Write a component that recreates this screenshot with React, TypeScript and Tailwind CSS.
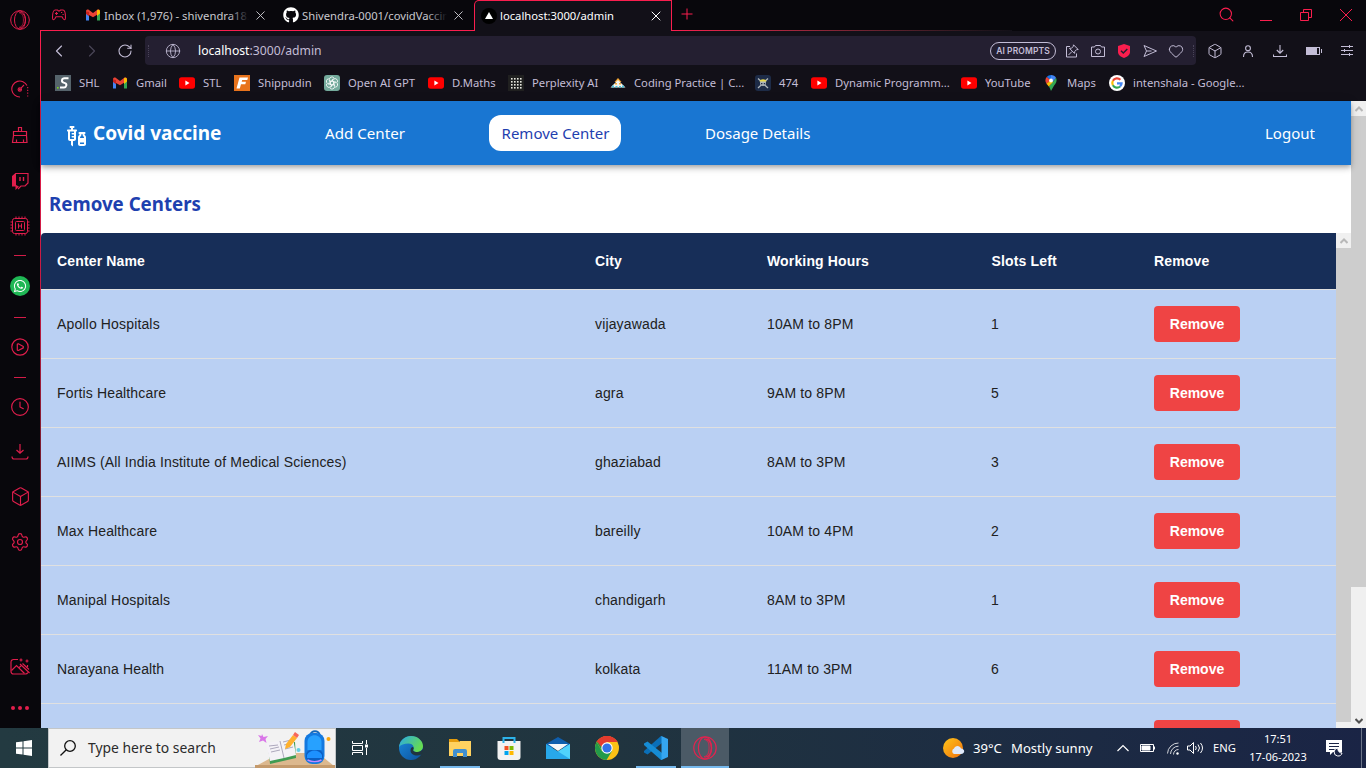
import React from 'react';
import { Box, Search, X, Settings, ChevronLeft, ChevronRight, RotateCw, Globe, Heart, Clock } from 'lucide-react';
import { MdVaccines } from 'react-icons/md';
import { FaWhatsapp, FaGithub } from 'react-icons/fa';

type IconProps = { className?: string };

const OperaIcon = ({ className }: IconProps) => (
  <svg viewBox="0 0 24 24" fill="none" stroke="currentColor" strokeWidth="1.2" className={className}>
    <circle cx="12" cy="12" r="11.2" />
    <ellipse cx="12" cy="12" rx="6.6" ry="11" />
    <path d="M11 3.4c3.8-1.6 7.4 2.6 7.4 8.600s-3.600 10.200-7.400 8.600" />
    <path d="M12.5 4.200c2.400 0 3.600 3.600 3.600 7.800s-1.200 7.800-3.600 7.800" opacity="0.7" />
  </svg>
);

const GmailIcon = ({ className }: IconProps) => (
  <svg viewBox="0 0 16 16" className={className}>
    <path d="M1 4v9.5h3V7z" fill="#4285f4" />
    <path d="M15 4v9.5h-3V7z" fill="#34a853" />
    <path d="M1 4.500C1 2.300 3 2.200 4 3l4 3 4-3c1-.8 3-.7 3 1.500L12 7.800 8 10.300 4 8z" fill="#ea4335" />
    <path d="M1 4.500V7l3 2.200V5z" fill="#c5221f" />
    <path d="M12 3.200c1.400-1 3-.5 3 1.500V6.600L12 9z" fill="#fbbc04" />
  </svg>
);

const YouTubeIcon = () => (
  <svg viewBox="0 0 16 16" className="size-4">
    <rect y="2.3" width="16" height="11.4" rx="2.600" fill="#ff0000" />
    <path d="M6.400 5.600v4.800L10.500 8z" fill="#fff" />
  </svg>
);

const ShlIcon = () => (
  <svg viewBox="0 0 16 16" className="size-4">
    <rect width="16" height="16" fill="#56646c" />
    <path d="M13.500 3.200H9.500c-3 0-3.300 3.600-1 4.400l1.500.500c2.300.800 1.500 4.400-1 4.400H5" fill="none" stroke="#fff" strokeWidth="2" />
    <rect x="2" y="12" width="1.600" height="1.600" fill="#7ed321" />
  </svg>
);

const FIcon = () => (
  <svg viewBox="0 0 16 16" className="size-4">
    <rect width="16" height="16" fill="#e8731c" />
    <path d="M5.500 2.500H14l-.7 2.500H8.200l-.5 1.800H12l-.7 2.400H7L5.800 13.500H2.500z" fill="#fff" />
  </svg>
);

const GptIcon = () => (
  <svg viewBox="0 0 16 16" className="size-4">
    <rect width="16" height="16" rx="3" fill="#74aa9c" />
    <g fill="none" stroke="#fff" strokeWidth="0.8">
      {[0, 60, 120, 180, 240, 300].map((a) => (
        <path key={a} d="M8 6L10 7.200V11M5.400 6.500V4.500a2.500 2.500 0 0 1 4.600-1.400" transform={`rotate(${a} 8 8)`} />
      ))}
    </g>
  </svg>
);

const PerplexityIcon = () => (
  <svg viewBox="0 0 16 16" className="size-4">
    <rect width="16" height="16" fill="#202020" />
    {[3, 6, 9, 12].map((y) => [3, 6, 9, 12].map((x) => <rect key={`${x}-${y}`} x={x} y={y} width="1.600" height="1.600" fill="#e8e8e0" />))}
  </svg>
);

const CodingIcon = () => (
  <svg viewBox="0 0 16 16" className="size-4">
    <path d="M8 3l3.500 4h-7z" fill="#f5a733" />
    <path d="M8 5l7.500 7.500H.5z" fill="#f4f4ee" />
    <path d="M5 8h2v1.500H5zM9 8h2v1.500H9z" fill="#f5a733" />
    <path d="M2 10.500h2v2H2zM5.500 11h2v1.500h-2zM9 11h2v1.500H9zM12 10.500h2v2h-2z" fill="#4fc3d9" />
  </svg>
);

const SkullIcon = () => (
  <svg viewBox="0 0 16 16" className="size-4">
    <rect width="16" height="16" rx="3" fill="#1d2b47" />
    <path d="M3 3.500l10 9.500M13 3.500L3 13" stroke="#aeb5ba" strokeWidth="1.300" />
    <circle cx="8" cy="8" r="3" fill="#aeb5ba" />
    <path d="M4.500 6.500C5 3.600 11 3.600 11.500 6.500z" fill="#e8d84a" />
    <path d="M6 8h1.400v1.300H6zM8.800 8h1.400v1.300H8.800z" fill="#1d2b47" />
  </svg>
);

const MapsIcon = () => (
  <svg viewBox="0 0 16 16" className="size-4">
    <path d="M8 0a5.600 5.600 0 0 0-4.300 2L8 6z" fill="#1a73e8" />
    <path d="M3.700 2C2 4 2 6.500 3.500 8.700L8 5.600z" fill="#ea4335" />
    <path d="M8 0c2.300 0 4.200 1.200 5.100 3L8 9z" fill="#4285f4" />
    <path d="M13.100 3c1.300 3-.3 5.600-2 7.500L8 16c-.8-2-1.400-3.400-2.200-4.400z" fill="#34a853" />
    <path d="M3.500 8.700l2.300 2.900L10 7 8 5z" fill="#fbbc04" />
    <circle cx="8" cy="5.500" r="1.900" fill="#fff" />
  </svg>
);

const GoogleIcon = () => (
  <svg viewBox="0 0 16 16" className="size-4">
    <circle cx="8" cy="8" r="8" fill="#fff" />
    <g fill="none" strokeWidth="2.200">
      <path d="M11.400 4.800A4.700 4.700 0 0 0 3.900 5.700" stroke="#ea4335" />
      <path d="M3.900 5.700a4.700 4.700 0 0 0 0 4.600" stroke="#fbbc04" />
      <path d="M3.900 10.300a4.700 4.700 0 0 0 7.200 1.200" stroke="#34a853" />
      <path d="M11.100 11.500A4.500 4.500 0 0 0 12.600 8.300H8" stroke="#4285f4" />
    </g>
  </svg>
);

const bookmarks: { label: string; icon: React.ReactNode; width: string }[] = [
  { label: 'SHL', icon: <ShlIcon />, width: 'w-[57px]' },
  { label: 'Gmail', icon: <GmailIcon className="size-4" />, width: 'w-[67px]' },
  { label: 'STL', icon: <YouTubeIcon />, width: 'w-[55px]' },
  { label: 'Shippudin', icon: <FIcon />, width: 'w-[90px]' },
  { label: 'Open AI GPT', icon: <GptIcon />, width: 'w-[104px]' },
  { label: 'D.Maths', icon: <YouTubeIcon />, width: 'w-[80px]' },
  { label: 'Perplexity AI', icon: <PerplexityIcon />, width: 'w-[102px]' },
  { label: 'Coding Practice | C...', icon: <CodingIcon />, width: 'w-[145px]' },
  { label: '474', icon: <SkullIcon />, width: 'w-[56px]' },
  { label: 'Dynamic Programm...', icon: <YouTubeIcon />, width: 'w-[150px]' },
  { label: 'YouTube', icon: <YouTubeIcon />, width: 'w-[82px]' },
  { label: 'Maps', icon: <MapsIcon />, width: 'w-[66px]' },
  { label: 'intenshala - Google...', icon: <GoogleIcon />, width: 'w-[150px]' },
];

const centers = [
  ['Apollo Hospitals', 'vijayawada', '10AM to 8PM', '1'],
  ['Fortis Healthcare', 'agra', '9AM to 8PM', '5'],
  ['AIIMS (All India Institute of Medical Sciences)', 'ghaziabad', '8AM to 3PM', '3'],
  ['Max Healthcare', 'bareilly', '10AM to 4PM', '2'],
  ['Manipal Hospitals', 'chandigarh', '8AM to 3PM', '1'],
  ['Narayana Health', 'kolkata', '11AM to 3PM', '6'],
  ['', '', '', ''],
];

const Dash = () => (
  <div className="flex h-3 shrink-0 items-center">
    <div className="h-px w-3 bg-[#d21c48]" />
  </div>
);

const Slot = ({ className, children }: { className: string; children: React.ReactNode }) => (
  <div className={`flex w-full shrink-0 items-center justify-center ${className}`}>{children}</div>
);

function Sidebar() {
  return (
    <aside className="flex h-full w-10 shrink-0 flex-col items-center bg-[#08070c] text-[#e01e4c]">
      <Slot className="h-10"><OperaIcon className="size-5" /></Slot>
      <Slot className="mt-[26px] h-[46px]">
        <svg viewBox="0 0 18 18" className="size-[18px]" fill="none" stroke="currentColor" strokeWidth="1.100">
          <path d="M9 17A8 8 0 1 1 16 5.500" />
          <path d="M16.700 7v10" strokeDasharray="1.200 1.600" />
          <circle cx="8.800" cy="9.500" r="1.700" />
          <path d="M10 8.200l3-3.200" />
          <circle cx="8.800" cy="9.500" r=".6" fill="currentColor" />
        </svg>
      </Slot>
      <Slot className="h-[46px]">
        <svg viewBox="0 0 18 18" className="size-[18px]" fill="none" stroke="currentColor" strokeWidth="1.200">
          <path d="M7.500 5.500V1.500h3v4M2.500 5.500h13v4h-13zM2.500 9.500L1.500 16.500h14.500L15.500 9.500M5.500 13.500v3M12.500 13.500v3" />
        </svg>
      </Slot>
      <Slot className="h-[45px]">
        <svg viewBox="0 0 18 18" className="size-[18px]" fill="none" stroke="currentColor">
          <path d="M4.500 1.500h12.500v9.500l-3 3H10l-3 3" strokeWidth="1.200" />
          <path d="M4.500 1L1 4v10.500h3.500V18l3.500-3.500-3-1.500V1z" fill="currentColor" stroke="none" />
          <path d="M9 5v4M12.500 5v4" strokeWidth="1.400" />
        </svg>
      </Slot>
      <Slot className="h-[46px]">
        <svg viewBox="0 0 20 20" className="size-5" fill="none" stroke="currentColor" strokeWidth="1">
          <rect x="2.500" y="2.500" width="15" height="15" rx="2" />
          <rect x="5.500" y="5.500" width="9" height="9" rx="1" />
          <path d="M8.500 7.500v5M11.500 7.500v5M8.500 10h3M6 .5v2M9 .5v2M12 .5v2M15 .5v2M6 17.500v2M9 17.500v2M12 17.500v2M15 17.500v2M.5 6h2M.5 9h2M.5 12h2M.5 15h2M17.500 6h2M17.500 9h2M17.500 12h2M17.500 15h2" />
        </svg>
      </Slot>
      <Dash />
      <Slot className="h-[50px]">
        <div className="flex size-5 items-center justify-center rounded-full bg-[#1fb755]">
          <FaWhatsapp className="size-[14px] text-white" />
        </div>
      </Slot>
      <Dash />
      <Slot className="h-12">
        <svg viewBox="0 0 18 18" className="size-[18px]" fill="none" stroke="currentColor" strokeWidth="1.200" strokeLinejoin="round">
          <circle cx="9" cy="9" r="8.200" />
          <path d="M6.300 6v6.200l1 .3 5-2.600V8.500L7.300 5.700z" />
        </svg>
      </Slot>
      <Dash />
      <Slot className="h-12"><Clock className="size-[20px]" strokeWidth={1.400} /></Slot>
      <Slot className="h-[42px]">
        <svg viewBox="0 0 18 18" className="size-[18px]" fill="none" stroke="currentColor" strokeWidth="1.200">
          <path d="M9 1v9M5.500 7L9 10.300 12.500 7M1 13.500c0 2 1 2.500 2 2.500h12c1 0 2-.5 2-2.500" />
        </svg>
      </Slot>
      <Slot className="h-[47px]"><Box className="size-[21px]" strokeWidth={1.300} /></Slot>
      <Slot className="h-11">
        <Settings className="size-5" strokeWidth={1.400} />
      </Slot>
      <Slot className="mt-[82px] h-[42px]">
        <svg viewBox="0 0 20 18" className="h-[18px] w-5" fill="none" stroke="currentColor" strokeWidth="1.200">
          <path d="M8 1.500H3.500a2.500 2.500 0 0 0-2.500 2.500v9.500A2.500 2.500 0 0 0 3.500 16h12a2.500 2.500 0 0 0 2.300-1.500" />
          <path d="M1.500 12.500l5-5 8 8M8.500 10L11 8M10 6l9.500 9M12.500 5.500l6.500 6" />
          <path d="M11 .5v3M9.500 2h3M17 1.500v3M15.500 3h3M17.500 7v2" />
        </svg>
      </Slot>
      <Slot className="h-10 gap-[3.500px]">
        <i className="size-[3.500px] rounded-full bg-current" />
        <i className="size-[3.500px] rounded-full bg-current" />
        <i className="size-[3.500px] rounded-full bg-current" />
      </Slot>
    </aside>
  );
}

function TabStrip() {
  return (
    <div className="flex h-[31px] shrink-0 bg-[#08070c] text-[11.250px] text-[#c9c7ce]">
      <div className="flex w-[434px] items-center border-b border-[#fa1e4e]">
        <svg viewBox="0 0 16 12" className="ml-[11px] h-3 w-4 shrink-0 text-[#e01e4c]" fill="none" stroke="currentColor" strokeWidth="1.100">
          <path d="M4 1h2.500l1 1h1l1-1H12c1.500 0 2.500 3.500 2.500 7.500 0 3-1.500 2.500-2.500 1l-1-1.700H5L4 9.500c-1 1.500-2.500 2-2.500-1C1.500 4.500 2.500 1 4 1z" />
          <path d="M4 4.500h3M5.500 3v3M10 3.500h1.200M11.500 5.500h1.200" />
        </svg>
        <GmailIcon className="ml-[18px] size-4 shrink-0" />
        <div className="relative ml-[3px] w-[145px] overflow-hidden pt-0.5 whitespace-nowrap">
          Inbox (1,976) - shivendra18.
          <div className="absolute inset-y-0 right-0 w-5 bg-linear-to-r from-transparent to-[#08070c]" />
        </div>
        <X className="ml-1 size-[15px] shrink-0" strokeWidth={1.500} />
        <FaGithub className="ml-[15px] size-4 shrink-0 text-white" />
        <div className="relative ml-[3px] w-[145px] overflow-hidden pt-0.5 whitespace-nowrap">
          Shivendra-0001/covidVaccine
          <div className="absolute inset-y-0 right-0 w-5 bg-linear-to-r from-transparent to-[#08070c]" />
        </div>
        <X className="ml-1 size-[15px] shrink-0" strokeWidth={1.500} />
      </div>
      <div className="flex w-[198px] items-center rounded-tl-[5px] border-t border-r border-l border-[#fa1e4e] bg-[#121018] text-white">
        <svg viewBox="0 0 16 16" className="ml-1.5 size-4 shrink-0">
          <circle cx="8" cy="8" r="8" fill="#000" />
          <path d="M8 4l4 7H4z" fill="#fff" />
        </svg>
        <span className="ml-[3px] w-[146px] whitespace-nowrap">localhost:3000/admin</span>
        <X className="ml-0.5 size-4 shrink-0" strokeWidth={1.500} />
      </div>
      <div className="flex flex-1 flex-col">
        <div className="flex h-[30px] items-center text-[#fa1e4e]">
          <svg viewBox="0 0 12 12" className="mb-0.5 ml-[9px] size-3" stroke="currentColor"><path d="M6 .5v11M.5 6h11" /></svg>
          <Search className="mb-0.5 ml-[525px] size-[17px]" strokeWidth={1.500} />
          <svg viewBox="0 0 12 12" className="ml-[25px] size-3" stroke="currentColor"><path d="M0 11.500h12" /></svg>
          <svg viewBox="0 0 12 12" className="ml-7 size-3" stroke="currentColor" fill="none"><path d="M.5 3.500h8v8h-8zM3.500 3.500v-3h8v8h-3" /></svg>
          <svg viewBox="0 0 12 12" className="ml-7 size-3" stroke="currentColor"><path d="M0 0l12 12M12 0L0 12" /></svg>
        </div>
        <div className="h-px w-[340px] bg-linear-to-r from-[#fa1e4e] to-[#121018]" />
      </div>
    </div>
  );
}

function AddressRow() {
  return (
    <div className="flex h-[39px] shrink-0 items-center text-[#c3bdd6]">
      <ChevronLeft className="ml-[8px] size-5" strokeWidth={1.400} />
      <ChevronRight className="ml-[13px] size-5 text-[#4a4657]" strokeWidth={1.400} />
      <RotateCw className="ml-[15px] size-4" strokeWidth={1.600} />
      <div className="ml-3 flex h-[29px] w-[1051px] items-center rounded bg-[#241f31]">
        <div className="ml-[3px] h-3 w-px border-l border-dotted border-[#4a4459]" />
        <Globe className="ml-4 size-4" strokeWidth={1.300} />
        <div className="ml-[17px] w-[792px] pt-0.5 text-[12.200px] whitespace-nowrap"><span className="text-white">localhost</span>:3000/admin</div>
        <div className="flex h-[18px] w-[66px] items-center justify-center rounded-full border border-[#c3bdd6] pt-px font-['Inter'] text-[8.500px] font-semibold tracking-[0.1px] whitespace-nowrap">AI PROMPTS</div>
        <svg viewBox="0 0 14 14" className="ml-[9px] size-[14px]" fill="none" stroke="currentColor">
          <path d="M5 2.500H1.500v10.500h10V9.500M3.500 11l3.500-3.500M8.500.8l4.700 4.700-1.700.2-1.700 1.700-.3 2-5-5 2-.3L8.300 2.500z" />
        </svg>
        <svg viewBox="0 0 14 14" className="ml-3 size-[14px]" fill="none" stroke="currentColor">
          <path d="M.5 3h3l1-1.500h5L10.500 3h3v9.500H.5z" /><circle cx="7" cy="7.500" r="2.500" />
        </svg>
        <svg viewBox="0 0 14 14" className="ml-3 size-[14px]">
          <path d="M7 0l6 2v6c0 3-3 5-6 6-3-1-6-3-6-6V2z" fill="#fa1e4e" /><path d="M4 6.700l2.300 2.300L10.300 5" fill="none" stroke="#241f31" strokeWidth="1.500" />
        </svg>
        <svg viewBox="0 0 14 14" className="ml-3 size-[14px]" fill="none" stroke="currentColor" strokeLinejoin="round">
          <path d="M1 1.500L13.500 7 1 12.500 3.500 7zM3.500 7h5" />
        </svg>
        <Heart className="ml-[11px] size-4" strokeWidth={1.500} />
        <div className="ml-[9px] h-3 w-px border-l border-dotted border-[#4a4459]" />
      </div>
      <Box className="ml-[11px] size-4" strokeWidth={1.500} />
      <svg viewBox="0 0 14 14" className="ml-[18px] size-[14px]" fill="none" stroke="currentColor" strokeWidth="1.100">
        <circle cx="7" cy="4.200" r="2.400" /><path d="M2.500 13c0-3.500 1.500-5 4.500-5s4.500 1.500 4.500 5" />
      </svg>
      <svg viewBox="0 0 14 14" className="ml-[18px] size-[14px]" fill="none" stroke="currentColor" strokeWidth="1.100">
        <path d="M7 1v8M3.800 6L7 9.200 10.200 6M.5 10.500v2h13v-2" />
      </svg>
      <svg viewBox="0 0 16 10" className="ml-[19px] h-[10px] w-4" fill="none" stroke="currentColor">
        <rect x=".5" y="1.500" width="13" height="7" /><rect x="0" y="1" width="11" height="8" fill="currentColor" stroke="none" /><path d="M15.500 3v4" />
      </svg>
      <svg viewBox="0 0 12 12" className="ml-[19px] size-3" fill="none" stroke="currentColor">
        <path d="M0 1.500h12M0 5.500h12M0 9.500h12M8.500 0v3M3.500 4v3M8.500 8v3" />
      </svg>
    </div>
  );
}

function Page() {
  return (
    <div className="flex min-h-0 flex-1 bg-white">
      <div className="flex min-w-0 flex-1 flex-col">
        <header className="z-10 flex h-16 shrink-0 items-center bg-[#1976d2] text-[15.150px] text-white shadow-[0_2px_4px_-1px_rgba(0,0,0,0.2),0_4px_5px_rgba(0,0,0,0.14),0_1px_10px_rgba(0,0,0,0.12)]">
          <MdVaccines className="mt-[5px] ml-6 size-6 shrink-0" />
          <div className="ml-1 w-[219px] text-[19px] font-bold whitespace-nowrap">Covid vaccine</div>
          <div className="ml-[13px] w-[164px] whitespace-nowrap">Add Center</div>
          <div className="flex h-9 w-[132px] items-center justify-center rounded-xl bg-white pl-px text-[15px] whitespace-nowrap text-[#1e40af]">Remove Center</div>
          <div className="ml-[84px] flex-1 text-[15px] whitespace-nowrap">Dosage Details</div>
          <div className="w-[86px] text-[15px] whitespace-nowrap">Logout</div>
        </header>
        <h1 className="flex h-[68px] shrink-0 items-center pt-[10px] pl-2 text-[18.700px] font-bold text-[#1e40af]">Remove Centers</h1>
        <div className="flex min-h-0 flex-1 overflow-hidden">
          <div className="flex w-[1295px] shrink-0 flex-col font-['Liberation_Sans',sans-serif] text-sm tracking-[0.0107em] text-[#212121]">
            <div className="grid h-[57px] shrink-0 grid-cols-[538px_172px_224.500px_162.500px_198px] items-center rounded-tl border-b border-[#e0e0e0] bg-[#172e58] font-bold text-white">
              {['Center Name', 'City', 'Working Hours', 'Slots Left', 'Remove'].map((h) => (
                <div key={h} className="pl-4">{h}</div>
              ))}
            </div>
            {centers.map((row, i) => (
              <div key={i} className="grid h-[69px] shrink-0 grid-cols-[538px_172px_224px_163px_198px] items-center border-b border-[#e0e0e0] bg-[#bad0f3]">
                {row.map((cell, j) => (
                  <div key={j} className="pl-4">{cell}</div>
                ))}
                <div className="pl-4">
                  <button className="block h-9 w-[86px] rounded bg-[#ef4444] font-bold tracking-normal text-white">Remove</button>
                </div>
              </div>
            ))}
          </div>
          <div className="flex w-[15px] flex-col bg-[#f0f0f0]">
            <div className="flex h-[15px] items-center justify-center text-[#b8b8b8]">
              <svg viewBox="0 0 8 6" className="h-1.5 w-2" fill="none" stroke="currentColor" strokeWidth="2"><path d="M.5 5L4 1.500 7.500 5" /></svg>
            </div>
            <div className="mb-1.5 flex-1 bg-[#cdcdcd]" />
          </div>
        </div>
      </div>
      <div className="flex w-[15px] shrink-0 flex-col items-center bg-[#f0f0f0]">
        <div className="flex h-[15px] items-center text-[#b8b8b8]">
          <svg viewBox="0 0 8 6" className="h-1.5 w-2" fill="none" stroke="currentColor" strokeWidth="2"><path d="M.5 5L4 1.500 7.500 5" /></svg>
        </div>
        <div className="h-[471px] w-full bg-[#cdcdcd]" />
        <div className="mt-auto flex h-[15px] items-center text-[#505050]">
          <svg viewBox="0 0 8 6" className="h-1.5 w-2" fill="none" stroke="currentColor" strokeWidth="2"><path d="M.5 1L4 4.500 7.500 1" /></svg>
        </div>
      </div>
    </div>
  );
}

function SearchArt() {
  return (
    <svg viewBox="0 0 80 40" className="h-[40px] w-[80px] shrink-0">
      <path d="M1 38L25 25h38l16 13z" fill="#dcb88e" />
      <path d="M0 37h80v3H0z" fill="#c49a6c" />
      <path d="M13 17l27-3 1 16-26 6z" fill="#3f9b52" />
      <path d="M11 15l13-2 14-3 3 17-12 3-14 3z" fill="#f4f2f7" />
      <path d="M25 13l4 17M14 18l9-1M15 21l9-2M16 24l9-2M28 14l8-2M29 17l8-2M30 21l8-2" stroke="#9b95ad" strokeWidth=".8" fill="none" />
      <path d="M31 16l7-9 4 3-7 9-5 2z" fill="#ffb02e" />
      <path d="M38 7l2-3 4 3-2 3z" fill="#f8675b" />
      <path d="M7 6l1.500 3L13 8l-2.500 3 1 4L8 12.500 4 14l1.500-3.500L3 7l3.500 1z" fill="#d977e8" />
      <circle cx="43.500" cy="22" r="2" fill="#62d0e6" />
      <circle cx="73.500" cy="11" r="2" fill="#f9a60c" />
      <path d="M55.500 7c0-5 9-5 9 0" fill="none" stroke="#1268bb" strokeWidth="2" />
      <rect x="49.500" y="5" width="20" height="31" rx="8" fill="#1479df" />
      <path d="M52.500 14c0-9 14-9 14 0v8h-14z" fill="#27a1ff" />
      <rect x="51" y="22" width="17" height="12" rx="5" fill="#0b5fc4" />
      <path d="M52 27c3-6 12-6 15 0v3H52z" fill="#1d91ff" />
      <path d="M52.500 32c4 2 10 2 14 0" stroke="#c08bff" strokeWidth="1.500" fill="none" />
    </svg>
  );
}

function Taskbar() {
  return (
    <footer className="flex h-10 shrink-0 items-center bg-linear-to-r from-[#233a41] via-[#20343f] via-45% to-[#1a2445] text-white">
      <div className="flex w-12 justify-center">
        <svg viewBox="0 0 16 16" className="size-4" fill="#fff"><path d="M0 2.300l6.500-.9v6.100H0zM7.500 1.200L16 0v7.500H7.500zM0 8.500h6.500v6.100L0 13.700zM7.500 8.500H16V16l-8.500-1.200z" /></svg>
      </div>
      <div className="flex h-10 w-72 items-center border border-[#c3c6c8] bg-[#f2f2f2] text-[#2b2b2b]">
        <svg viewBox="0 0 16 16" className="ml-[11px] size-4 shrink-0" fill="none" stroke="#111" strokeWidth="1.300"><circle cx="10" cy="6" r="5.300" /><path d="M6.300 9.700L.5 15.500" /></svg>
        <span className="ml-3 w-[168px] text-[13.900px] whitespace-nowrap">Type here to search</span>
        <SearchArt />
      </div>
      <div className="flex w-12 justify-center">
        <svg viewBox="0 0 16 16" className="size-4" fill="none" stroke="#fff"><path d="M.5 1v2.500h10V1M.5 15v-2.500h10V15M.5 5.500h10v5H.5zM14.500 0v4M14.500 8v7" /><path d="M13 4.500h3v3h-3z" fill="#fff" stroke="none" /></svg>
      </div>
      <div className="ml-[2px] flex h-10">
        <div className="flex w-[49px] items-center justify-center">
          <svg viewBox="0 0 24 24" className="size-6">
            <defs>
              <linearGradient id="edgeTop" x1="0" y1="0" x2="1" y2="0.5"><stop offset="0" stopColor="#2aa9e8" /><stop offset="1" stopColor="#66dc51" /></linearGradient>
              <linearGradient id="edgeLow" x1="0" y1="0" x2="1" y2="1"><stop offset="0" stopColor="#1b8bdc" /><stop offset="1" stopColor="#0c4f9a" /></linearGradient>
            </defs>
            <circle cx="12" cy="12" r="12" fill="url(#edgeLow)" />
            <path d="M0 11C1 4 6 0 12 0c7 0 12 5 12 10 0 4-3 6-6 6-3 0-4.500-1-3.500-3 .8-2-.5-5.500-5-5.500C5 7.500 1.500 9 0 11z" fill="url(#edgeTop)" />
            <path d="M14.500 13c-1 2 .5 3 3.500 3 3 0 5-1.500 6-3v3.500l-1.500 2c-4 2-11 1-11-4 0-2.500 1.300-3.500 2.500-3.500 .7 .5 .9 1.200 .5 2z" fill="#20343f" />
          </svg>
        </div>
        <div className="flex w-[49px] flex-col items-center">
          <svg viewBox="0 0 22 18" className="mt-[11px] mb-[9px] h-[18px] w-[22px]"><path d="M0 0h8l2 2v3H0z" fill="#e59c0c" /><path d="M0 3h10l1-1h11v15H0z" fill="#ffd260" /><path d="M4 18v-6q0-2 2-2h10q2 0 2 2v6h-4v-4H8v4z" fill="#3f8fd0" /></svg>
          <div className="h-0.5 w-10 bg-[#76b9ed]" />
        </div>
        <div className="flex w-[49px] items-center justify-center">
          <svg viewBox="0 0 24 24" className="size-6"><path d="M.5 5h23v16q0 3-3 3h-17q-3 0-3-3z" fill="#f2f2f2" /><path d="M6.500 7V2h11v5" fill="none" stroke="#2db3ea" strokeWidth="2" /><path d="M7.500 10h4v4h-4z" fill="#f25022" /><path d="M12.500 10h4v4h-4z" fill="#7fba00" /><path d="M7.500 15h4v4h-4z" fill="#00a4ef" /><path d="M12.500 15h4v4h-4z" fill="#ffb900" /></svg>
        </div>
        <div className="flex w-[49px] items-center justify-center">
          <svg viewBox="0 0 24 24" className="size-6"><path d="M0 8l12-7 12 7v4H0z" fill="#0f5ead" /><path d="M0 8l12 7.500L24 8v15H0z" fill="#28a8ea" /><path d="M24 8v15L12 15.500z" fill="#50d2fb" /><path d="M2 8h20l-10 7z" fill="#f4f6f8" /></svg>
        </div>
        <div className="flex w-[49px] items-center justify-center">
          <svg viewBox="0 0 24 24" className="size-6"><circle cx="12" cy="12" r="12" fill="#fbc116" /><path d="M1.600 6A12 12 0 0 1 22.400 6H12z" fill="#e33b2e" /><path d="M1.600 6A12 12 0 0 0 11.500 24l5.500-9H6.800z" fill="#229a4a" /><path d="M1.600 6L7 15l5-8z" fill="#229a4a" /><path d="M22.400 6H12L6.500 11 2 5.500A12 12 0 0 1 22.400 6z" fill="#e33b2e" /><circle cx="12" cy="12" r="5.700" fill="#fff" /><circle cx="12" cy="12" r="4.600" fill="#3273e8" /></svg>
        </div>
        <div className="flex w-[49px] flex-col items-center">
          <svg viewBox="0 0 24 24" className="mt-2 mb-1.5 size-6 shrink-0"><path d="M18 0v7L3.500 18.500 0 16.500v-1.500L17 0z" fill="#0a6fb8" /><path d="M0 7.500L3.500 5.500 18 17v7h-1L0 9z" fill="#168cd4" /><path d="M17.500 0L24 3v18l-6.500 3z" fill="#35a6f0" /></svg>
          <div className="h-0.5 w-10 bg-[#76b9ed]" />
        </div>
        <div className="ml-px flex w-12 flex-col items-center bg-[#4b5a66] text-[#e0244f]">
          <OperaIcon className="mt-2 mb-1.5 size-6 shrink-0" />
          <div className="h-0.5 w-full bg-[#76b9ed]" />
        </div>
      </div>
      <svg viewBox="0 0 22 20" className="ml-[214px] h-5 w-[22px] shrink-0">
        <defs><linearGradient id="sun" x1="0" y1="0" x2="1" y2="1"><stop offset="0" stopColor="#ffc61a" /><stop offset="1" stopColor="#f0700d" /></linearGradient></defs>
        <circle cx="10" cy="10" r="10" fill="url(#sun)" />
        <path d="M11 16a3 3 0 0 1 0-5.500c1-3.500 6-3.500 7 0 4 0 4.500 5.500 0 5.500z" fill="#dfe9fb" />
      </svg>
      <span className="ml-2 w-[38px] pt-px text-[13.100px] whitespace-nowrap">39°C</span>
      <span className="w-[106px] pt-px text-[13.100px] whitespace-nowrap">Mostly sunny</span>
      <svg viewBox="0 0 12 8" className="h-2 w-3 shrink-0" fill="none" stroke="#fff" strokeWidth="1.200"><path d="M.5 7L6 1.500 11.500 7" /></svg>
      <svg viewBox="0 0 16 10" className="ml-[11px] h-[10px] w-4 shrink-0" fill="none" stroke="#fff"><path d="M.5 1.500h13v7H.5zM14.500 3.500v3" /><path d="M2 3h8v4H2z" fill="#fff" /></svg>
      <svg viewBox="0 0 14 14" className="ml-2.5 size-[14px] shrink-0" fill="none" stroke="#fff">
        <path d="M1.500 12.500A11 11 0 0 1 12.500 2M4.500 13A8 8 0 0 1 12.500 5.200M7.500 13.500a5 5 0 0 1 5-5" opacity=".8" /><circle cx="11.500" cy="12.500" r="1.200" fill="#fff" stroke="none" />
      </svg>
      <svg viewBox="0 0 17 14" className="ml-[7px] h-[14px] w-[17px] shrink-0" fill="none" stroke="#fff"><path d="M.5 5H3l3.500-3.500v11L3 9H.5zM8.500 5q1.500 2 0 4M11 3.500q3 3.500 0 7M13.500 2q4 5 0 10" /></svg>
      <span className="ml-[9px] w-[34px] shrink-0 text-[11.200px] whitespace-nowrap">ENG</span>
      <div className="flex w-[62px] shrink-0 flex-col items-center gap-0.5 text-[11px] leading-4 whitespace-nowrap"><span>17:51</span><span>17-06-2023</span></div>
      <svg viewBox="0 0 18 18" className="ml-4 size-[18px] shrink-0"><path d="M1 1h16v12H8l-3 3v-3H1z" fill="#fff" /><path d="M4 4.500h10M4 7.500h10M4 10.500h6" stroke="#1a2445" /><path d="M13 9a4 4 0 1 0 4 5 4 4 0 0 1-4-5z" fill="#1a2445" stroke="#fff" /></svg>
      <div className="ml-auto h-10 w-[5px] shrink-0 border-l border-[#6b7488]" />
    </footer>
  );
}

export default function App() {
  return (
    <div className="flex h-[768px] w-[1366px] flex-col overflow-hidden bg-[#121018] font-['Noto_Sans',sans-serif]">
      <div className="flex h-[728px] shrink-0">
        <Sidebar />
        <div className="flex min-w-0 flex-1 flex-col">
          <TabStrip />
          <div className="flex min-h-0 flex-1">
            <div className="w-px shrink-0 bg-linear-to-b from-[#fa1e4e] via-[#c01a42] via-40% to-[#08070c]" />
            <div className="flex min-w-0 flex-1 flex-col">
              <AddressRow />
              <div className="flex h-[31px] shrink-0 items-center pb-[5px] pl-[14px] text-[11.250px] text-[#c3bdd6]">
                {bookmarks.map((b) => (
                  <div key={b.label} className={`flex shrink-0 items-center gap-2 whitespace-nowrap ${b.width}`}>
                    {b.icon}
                    <span>{b.label}</span>
                  </div>
                ))}
              </div>
              <Page />
            </div>
          </div>
        </div>
      </div>
      <Taskbar />
    </div>
  );
}
